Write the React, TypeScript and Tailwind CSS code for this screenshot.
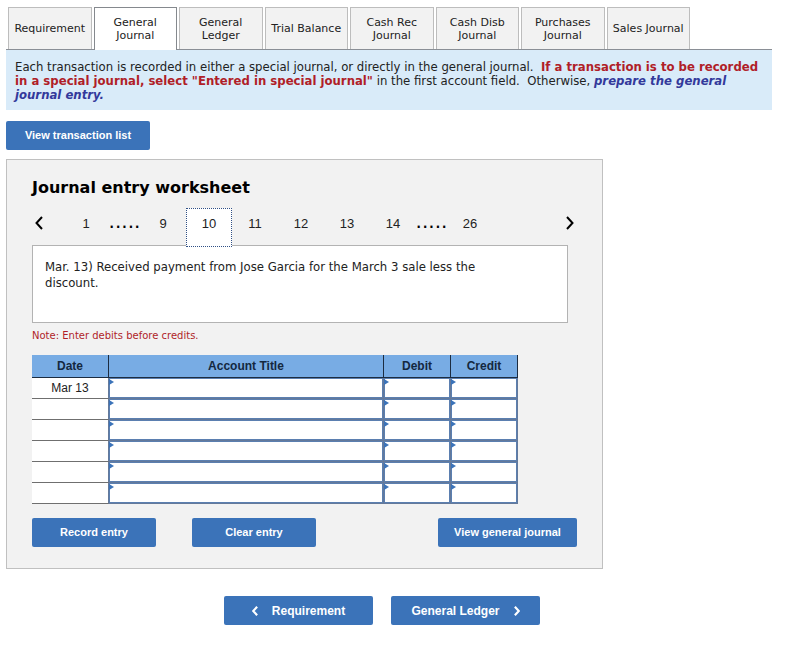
import { useState } from "react";

const TABS = [
  "Requirement",
  "General Journal",
  "General Ledger",
  "Trial Balance",
  "Cash Rec Journal",
  "Cash Disb Journal",
  "Purchases Journal",
  "Sales Journal",
];

const PAGES = ["1", "...", "9", "10", "11", "12", "13", "14", "...", "26"];

const DATES = ["Mar 13", "", "", "", "", ""];

const COLUMNS = ["Account Title", "Debit", "Credit"];

const BUTTON =
  "h-[29px] rounded-[2px] bg-[#3b73b9] font-['Liberation_Sans',sans-serif] font-bold text-white hover:bg-[#2f62a3]";

const COPY = "font-['DejaVu_Sans_Condensed','DejaVu_Sans',sans-serif] text-[13px]";

function Chevron({ dir, className }: { dir: "left" | "right"; className: string }) {
  return (
    <svg viewBox="0 0 8 14" className={className} fill="none" stroke="currentColor" aria-hidden="true">
      <path d={dir === "left" ? "M7 1L1.5 7L7 13" : "M1 1L6.5 7L1 13"} />
    </svg>
  );
}

function EntryCell({ label }: { label: string }) {
  return (
    <td className="relative border-r border-b border-[#64799a] p-0">
      <input
        type="text"
        aria-label={label}
        className="block h-5 w-full border border-[#5b7fb0] bg-white px-2 text-[12px] outline-none"
      />
      <svg viewBox="0 0 5 6" className="absolute top-[1px] left-0 h-[6px] w-[5px]" aria-hidden="true">
        <path d="M0 0L5 3L0 6Z" fill="#3b73b9" />
      </svg>
    </td>
  );
}

export default function App() {
  const [tab, setTab] = useState("General Journal");
  const [page, setPage] = useState("10");

  return (
    <div className="bg-white pt-[7px] pr-8 pb-6 pl-[6px] font-['DejaVu_Sans',sans-serif] text-[12px] text-[#222]">
      <nav className="border-b border-[#8a8f96] pl-[2px]">
        <div className="grid max-w-[682px] grid-cols-8 gap-[2px]">
          {TABS.map((t) => (
            <button
              key={t}
              onClick={() => setTab(t)}
              className={`border border-b-0 px-1 text-[11px] leading-[13px] ${
                t === tab
                  ? "relative -mb-px h-[43px] border-[#85898e] bg-white"
                  : "h-[42px] border-[#bdbdbd] bg-[#f2f2f2]"
              }`}
            >
              {t}
            </button>
          ))}
        </div>
      </nav>

      <p className={`${COPY} bg-[#d9ebf9] px-[9px] pt-[10px] pb-2 leading-[14px]`}>
        Each transaction is recorded in either a special journal, or directly in the general journal.&nbsp;{" "}
        <strong className="text-[#b01e28]">
          If a transaction is to be recorded in a special journal, select "Entered in special journal"
        </strong>{" "}
        in the first account field.&nbsp; Otherwise,{" "}
        <em className="font-bold text-[#33399b]">prepare the general journal entry.</em>
      </p>

      <button className={`${BUTTON} mt-[11px] block w-36 text-[11px]`}>View transaction list</button>

      <section className="mt-[9px] max-w-[597px] border border-[#c0c0c0] bg-[#f2f2f2] px-[25px] pb-[21px]">
        <h1 className="pt-[18px] text-[16px] leading-5 font-bold text-black">Journal entry worksheet</h1>

        <div className="mt-[10px] flex h-[39px] items-center font-['Liberation_Sans',sans-serif] text-[13px]">
          <button aria-label="Previous entry" className="w-[31px] pb-[10px] pl-[3px] text-black">
            <Chevron dir="left" className="h-[14px] w-[8px] stroke-2" />
          </button>
          {PAGES.map((p, i) =>
            p === "..." ? (
              <span
                key={i}
                className="flex w-[31px] justify-center pb-[14px] font-['DejaVu_Sans',sans-serif] text-[20px] leading-6 text-black"
              >
                .....
              </span>
            ) : (
              <button
                key={i}
                onClick={() => setPage(p)}
                className={`h-[39px] w-[46px] pb-[8px] ${
                  p === page ? "relative z-10 border border-dotted border-[#2f4f85] bg-white" : ""
                }`}
              >
                {p}
              </button>
            )
          )}
          <button aria-label="Next entry" className="ml-auto pr-[3px] pb-[10px] text-black">
            <Chevron dir="right" className="h-[14px] w-[8px] stroke-2" />
          </button>
        </div>

        <div
          className={`${COPY} -mt-[2px] mr-[9px] min-h-[78px] border border-[#b3b3b3] bg-white py-[13px] pr-12 pl-3 leading-4`}
        >
          Mar. 13) Received payment from Jose Garcia for the March 3 sale less the discount.
        </div>

        <p className="mt-[6px] text-[10px] leading-[14px] text-[#b01e28]">Note: Enter debits before credits.</p>

        <table className="mt-3 w-full max-w-[486px] table-fixed border-separate border-spacing-0 bg-white font-['Liberation_Sans',sans-serif] text-[12px]">
          <colgroup>
            <col className="w-[77px]" />
            <col />
            <col className="w-[67px]" />
            <col className="w-[67px]" />
          </colgroup>
          <thead>
            <tr className="h-[23px] bg-[#78ace4] text-[#14283f]">
              {["Date", ...COLUMNS].map((c) => (
                <th key={c} className="border-r border-b border-[#1c2c40] p-0">
                  {c}
                </th>
              ))}
            </tr>
          </thead>
          <tbody>
            {DATES.map((d, i) => (
              <tr key={i} className="h-[21px]">
                <td className="border-r border-b border-r-[#64799a] border-b-[#6f6f6f] p-0 text-center">{d}</td>
                {COLUMNS.map((c) => (
                  <EntryCell key={c} label={`${c}, line ${i + 1}`} />
                ))}
              </tr>
            ))}
          </tbody>
        </table>

        <div className="mt-[14px] flex text-[11px]">
          <button className={`${BUTTON} w-[124px]`}>Record entry</button>
          <button className={`${BUTTON} ml-9 w-[124px]`}>Clear entry</button>
          <button className={`${BUTTON} ml-auto w-[139px]`}>View general journal</button>
        </div>
      </section>

      <div className="mt-[27px] flex justify-center gap-[18px] pr-[14px] text-[12px]">
        <button className={`${BUTTON} flex w-[149px] items-center justify-center gap-[14px]`}>
          <Chevron dir="left" className="h-[10px] w-[6px] stroke-3" />
          Requirement
        </button>
        <button className={`${BUTTON} flex w-[149px] items-center justify-center gap-[14px]`}>
          General Ledger
          <Chevron dir="right" className="h-[10px] w-[6px] stroke-3" />
        </button>
      </div>
    </div>
  );
}
